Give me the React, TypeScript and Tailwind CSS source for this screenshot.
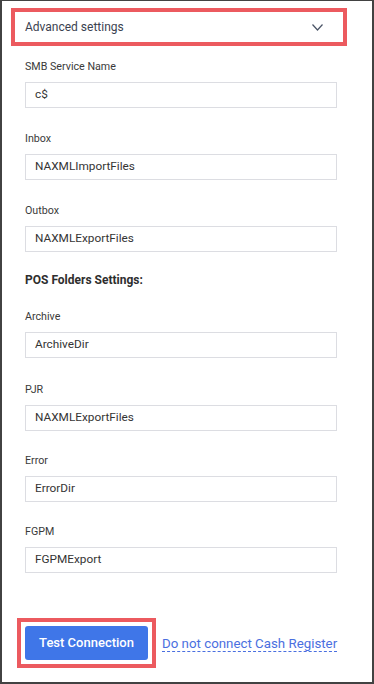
import React from "react";

const Field = ({ label, value, className = "" }: { label: string; value: string; className?: string }) => (
  <div className={"flex flex-col " + className}>
    <div className="h-[16px] leading-[16px] text-[10.7px] text-[#3a3a3a]">{label}</div>
    <div className="mt-[7px] h-[26px] w-[312px] border border-[#dcdde2] flex items-center pl-[9px] text-[11.8px] text-[#343434]">
      {value}
    </div>
  </div>
);

export default function App() {
  return (
    <div className="w-[374px] h-[684px] bg-white border-l-2 border-r-2 border-t border-b-2 border-[#424242] font-['Roboto',sans-serif] flex flex-col">
      <div className="mt-[7px] ml-[9px] w-[336px] h-[38px] border-4 border-[#ec5a5f] flex items-center justify-between pl-[10px] pr-[20px]">
        <span className="text-[12px] text-[#3b4250]">Advanced settings</span>
        <svg width="11" height="7" viewBox="0 0 11 7" fill="none">
          <path d="M0.5 0.5 L5.5 6 L10.5 0.5" stroke="#4a5466" strokeWidth="1.2" />
        </svg>
      </div>
      <div className="pl-[23px] flex flex-col">
        <Field label="SMB Service Name" value="c$" className="mt-[13px]" />
        <Field label="Inbox" value="NAXMLImportFiles" className="mt-[23px]" />
        <Field label="Outbox" value="NAXMLExportFiles" className="mt-[23px]" />
        <div className="mt-[20px] h-[16px] leading-[16px] text-[12px] font-bold text-[#2e2e2e]">POS Folders Settings:</div>
        <Field label="Archive" value="ArchiveDir" className="mt-[21px]" />
        <Field label="PJR" value="NAXMLExportFiles" className="mt-[24px]" />
        <Field label="Error" value="ErrorDir" className="mt-[22px]" />
        <Field label="FGPM" value="FGPMExport" className="mt-[22px]" />
      </div>
      <div className="mt-[45px] ml-[15px] flex items-center">
        <div className="border-4 border-[#ec5a5f] p-[4px]">
          <button className="w-[123px] h-[34px] rounded-[3px] bg-[#3f76e8] text-white text-[13px] font-medium">
            Test Connection
          </button>
        </div>
        <span className="ml-[6px] text-[13.3px] text-[#4a6fe0] border-b border-dashed border-[#4a6fe0] leading-[15px] mt-[2px]">
          Do not connect Cash Register
        </span>
      </div>
    </div>
  );
}
